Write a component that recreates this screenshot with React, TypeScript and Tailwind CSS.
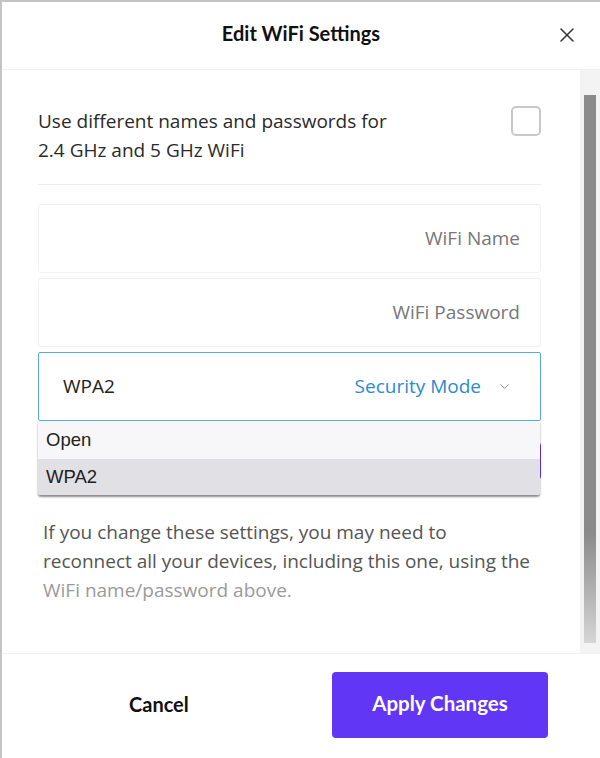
import { X, ChevronDown } from "lucide-react";

const body = { fontFamily: "'Open Sans', Lato, sans-serif" };
const heading = { fontFamily: "Lato, 'Open Sans', sans-serif" };

const TextField = ({ label }: { label: string }) => (
  <div className="h-[69px] flex items-center justify-end pr-[20px] border border-[#f1f1f3] rounded-[3px] text-[19px] text-[#777]">
    {label}
  </div>
);

export default function App() {
  return (
    <div className="w-[600px] h-[758px] bg-white border-l-2 border-t-2 border-[#c4c4c4] flex flex-col overflow-hidden" style={body}>
      {/* header */}
      <div className="h-[68px] shrink-0 flex items-center justify-center pb-[5px] relative border-b border-[#f1f1f1]">
        <span className="text-[20px] font-bold text-[#111]" style={heading}>Edit WiFi Settings</span>
        <X className="absolute right-[21px] top-[21px] text-[#333]" size={24} strokeWidth={1.5} />
      </div>

      {/* body */}
      <div className="flex-1 flex min-h-0">
        <div className="w-[539px] pl-[36px] shrink-0">
          <div className="flex items-start justify-between pt-[37px] pb-[19px] border-b border-[#ededed]">
            <p className="text-[19px] leading-[29px] text-[#2a2a2a]">
              Use different names and passwords for
              <br />
              2.4 GHz and 5 GHz WiFi
            </p>
            <div className="w-[30px] h-[30px] mt-[-1px] rounded-[5px] border-2 border-[#c8c8c8]" />
          </div>

          <div className="flex flex-col gap-[5px] mt-[19px]">
            <TextField label="WiFi Name" />
            <TextField label="WiFi Password" />
          </div>

          <div className="relative mt-[5px]">
            <div className="h-[69px] flex items-center pl-[24px] pr-[28px] border border-[#5aa9dd] rounded-[2px] text-[19px]">
              <span className="text-[#222] flex-1">WPA2</span>
              <span className="text-[#2c8ad0] mr-[16px]">Security Mode</span>
              <ChevronDown size={15} strokeWidth={1.6} className="text-[#888]" />
            </div>

            <div className="h-[40px] mt-[20px] rounded-[5px] bg-[#6236f5]" />

            <div
              className="absolute left-0 top-[69px] w-[502px] rounded-b-[3px] shadow-[0_2px_2px_rgba(0,0,0,0.45)] text-[18.5px] text-[#222] overflow-hidden"
              style={{ fontFamily: "'Liberation Sans', Arial, sans-serif" }}
            >
              <div className="h-[38px] flex items-center pl-[8px] bg-[#f7f7f9]">Open</div>
              <div className="h-[36px] flex items-center pl-[8px] bg-[#e1e1e5]">WPA2</div>
            </div>
          </div>

          <p className="mt-[37px] pl-[5px] text-[19px] leading-[29px] text-[#555]">
            If you change these settings, you may need to
            <br />
            reconnect all your devices, including this one, using the
            <br />
            <span className="text-[#9a9a9a]">WiFi name/password above.</span>
          </p>
        </div>

        <div className="flex-1" />

        {/* scrollbar */}
        <div className="w-[20px] shrink-0 bg-[#f3f3f3] pt-[25px] pb-[10px] flex justify-center">
          <div className="w-[12px] h-full bg-gradient-to-b from-[#8b8b8b] via-[#8b8b8b] via-80% to-[#d6d6d6]" />
        </div>
      </div>

      {/* footer */}
      <div className="h-[105px] shrink-0 border-t border-[#f1f1f1] flex items-center pl-[127px] pr-[52px] pb-[2px]" style={heading}>
        <span className="text-[20px] font-bold text-[#111] flex-1 pb-[2px]">Cancel</span>
        <button className="w-[216px] h-[66px] rounded-[4px] bg-[#6236f5] text-white text-[20.5px] font-bold pb-[3px]">
          Apply Changes
        </button>
      </div>
    </div>
  );
}
